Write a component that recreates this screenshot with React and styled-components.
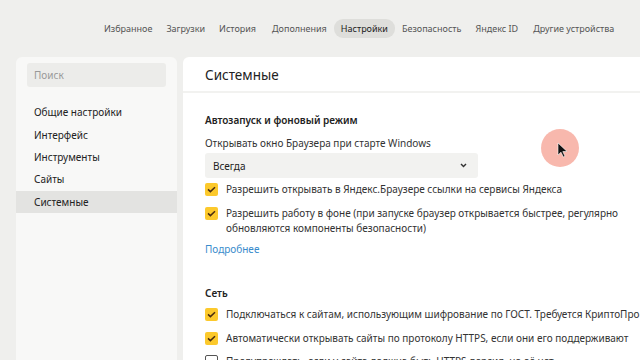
import React from "react";
import styled, { createGlobalStyle } from "styled-components";

const Global = createGlobalStyle`
  html, body { margin: 0; padding: 0; background: #efefed; overflow: hidden; }
  body { font-family: "Noto Sans", "Open Sans", sans-serif; color: #222; }
  #root { width: 640px; height: 360px; overflow: hidden; position: relative; }
`;

const Page = styled.div`
  width: 640px;
  height: 360px;
  display: flex;
  flex-direction: column;
`;

const TopNav = styled.nav`
  height: 57px;
  display: flex;
  align-items: center;
  padding-left: 97px;
  padding-bottom: 1px;
  box-sizing: border-box;
  flex-shrink: 0;
`;

const NavItem = styled.div`
  font-size: 9px;
  color: ${(p) => (p.$active ? "#222" : "#555")};
  padding: 3px 7px;
  margin-right: ${(p) => p.$mr || 0}px;
  border-radius: 9px;
  background: ${(p) => (p.$active ? "#dededb" : "transparent")};
  white-space: nowrap;
`;

const Columns = styled.div`
  display: flex;
  gap: 6px;
  padding-left: 16px;
  flex: 1;
  min-height: 0;
`;

const Sidebar = styled.aside`
  width: 161px;
  flex-shrink: 0;
  background: #f8f8f7;
  border-radius: 6px 6px 0 0;
  padding-top: 6px;
  display: flex;
  flex-direction: column;
`;

const Search = styled.div`
  margin: 0 11px;
  height: 24px;
  flex-shrink: 0;
  background: #ececea;
  border-radius: 3px;
  display: flex;
  align-items: center;
  padding-left: 7px;
  font-size: 10px;
  color: #999;
`;

const Menu = styled.ul`
  list-style: none;
  margin: 14px 0 0;
  padding: 0;
`;

const MenuItem = styled.li`
  height: 22.4px;
  display: flex;
  align-items: center;
  padding-left: 18px;
  font-size: 10px;
  color: #222;
  background: ${(p) => (p.$active ? "#e3e3e1" : "transparent")};
`;

const Main = styled.main`
  width: 470px;
  flex-shrink: 0;
  display: flex;
  flex-direction: column;
  background: #fff;
  border-radius: 6px 0 0 0;
  overflow: hidden;
`;

const MainHeader = styled.header`
  height: 36px;
  flex-shrink: 0;
  box-sizing: border-box;
  padding-top: 2px;
  display: flex;
  align-items: center;
  padding-left: 22px;
  font-size: 13.5px;
  color: #222;
  border-bottom: 2px solid #f2f2f0;
`;

const Body = styled.div`
  flex-shrink: 0;
  padding: 19px 0 0 22px;
  display: flex;
  flex-direction: column;
`;

const SectionTitle = styled.h3`
  margin: 0;
  font-size: 10px;
  font-weight: 600;
  color: #222;
  line-height: 16px;
  margin-top: ${(p) => p.$mt || 0}px;
`;

const Label = styled.div`
  font-size: 10px;
  color: #333;
  line-height: 16px;
  margin-top: 7px;
`;

const Select = styled.div`
  margin-top: 2px;
  width: 273px;
  height: 25px;
  flex-shrink: 0;
  box-sizing: border-box;
  background: #f2f2f0;
  border-radius: 3px;
  display: flex;
  align-items: center;
  justify-content: space-between;
  padding: 0 11px 0 8px;
  font-size: 10px;
  color: #222;
`;

const Row = styled.label`
  display: flex;
  align-items: flex-start;
  gap: 8px;
  margin-top: ${(p) => p.$mt || 0}px;
  font-size: 10px;
  color: #333;
  line-height: 15px;
  white-space: ${(p) => (p.$wrap ? "normal" : "nowrap")};
  width: ${(p) => (p.$wrap ? "420px" : "auto")};
`;

const Box = styled.span`
  width: 13px;
  height: 13px;
  flex-shrink: 0;
  box-sizing: border-box;
  margin-top: 1px;
  border-radius: 2px;
  background: ${(p) => (p.$checked ? "#fcc92c" : "#fff")};
  border: ${(p) => (p.$checked ? "none" : "1.3px solid #555")};
  display: flex;
  align-items: center;
  justify-content: center;
`;

const Link = styled.a`
  font-size: 10px;
  color: #3a8ccc;
  line-height: 16px;
  margin-top: 5px;
  text-decoration: none;
`;

const CursorHalo = styled.div`
  position: absolute;
  left: 541px;
  top: 129px;
  width: 38px;
  height: 38px;
  border-radius: 50%;
  background: rgba(245, 160, 145, 0.75);
`;

const CursorIcon = styled.svg`
  position: absolute;
  left: 557px;
  top: 142px;
`;

const Check = () => (
  <svg width="9" height="7" viewBox="0 0 9 7">
    <path d="M1 3.4 L3.4 5.6 L8 1.2" fill="none" stroke="#4a2c10" strokeWidth="1.5" />
  </svg>
);

const Checkbox = ({ checked }) => <Box $checked={checked}>{checked && <Check />}</Box>;

export default function App() {
  const nav = [
    ["Избранное", 0],
    ["Загрузки", 0],
    ["История", 2],
    ["Дополнения", 0],
    ["Настройки", 0, true],
    ["Безопасность", 0],
    ["Яндекс ID", 1],
    ["Другие устройства", 0],
  ];
  return (
    <>
      <Global />
      <Page>
        <TopNav>
          {nav.map(([t, mr, a]) => (
            <NavItem key={t} $active={a} $mr={mr}>
              {t}
            </NavItem>
          ))}
        </TopNav>
        <Columns>
          <Sidebar>
            <Search>Поиск</Search>
            <Menu>
              <MenuItem>Общие настройки</MenuItem>
              <MenuItem>Интерфейс</MenuItem>
              <MenuItem>Инструменты</MenuItem>
              <MenuItem>Сайты</MenuItem>
              <MenuItem $active>Системные</MenuItem>
            </Menu>
          </Sidebar>
          <Main>
            <MainHeader>Системные</MainHeader>
            <Body>
              <SectionTitle>Автозапуск и фоновый режим</SectionTitle>
              <Label>Открывать окно Браузера при старте Windows</Label>
              <Select>
                <span>Всегда</span>
                <svg width="7" height="5" viewBox="0 0 7 5">
                  <path d="M1 1 L3.5 3.6 L6 1" fill="none" stroke="#333" strokeWidth="1.4" />
                </svg>
              </Select>
              <Row $mt={4}>
                <Checkbox checked />
                <span>Разрешить открывать в Яндекс.Браузере ссылки на сервисы Яндекса</span>
              </Row>
              <Row $mt={9} $wrap>
                <Checkbox checked />
                <span>
                  Разрешить работу в фоне (при запуске браузер открывается быстрее, регулярно
                  обновляются компоненты безопасности)
                </span>
              </Row>
              <Link>Подробнее</Link>
              <SectionTitle $mt={28}>Сеть</SectionTitle>
              <Row $mt={6}>
                <Checkbox checked />
                <span>Подключаться к сайтам, использующим шифрование по ГОСТ. Требуется КриптоПро</span>
              </Row>
              <Row $mt={9}>
                <Checkbox checked />
                <span>Автоматически открывать сайты по протоколу HTTPS, если они его поддерживают</span>
              </Row>
              <Row $mt={8}>
                <Checkbox />
                <span>Предупреждать, если у сайта должна быть HTTPS-версия, но её нет</span>
              </Row>
            </Body>
          </Main>
        </Columns>
      </Page>
      <CursorHalo />
      <CursorIcon width="11" height="16" viewBox="0 0 11 16">
        <path d="M1 1 L1 13 L4 10.2 L6.3 15 L8 14.2 L5.8 9.6 L10 9.4 Z" fill="#111" stroke="#fff" strokeWidth="0.6" />
      </CursorIcon>
    </>
  );
}
